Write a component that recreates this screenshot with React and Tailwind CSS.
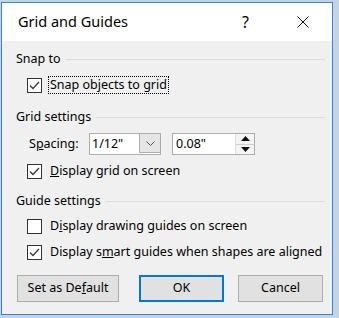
import React from 'react';

const font = { fontFamily: '"Noto Sans", "Open Sans", sans-serif' };

const Check = ({ checked }) => (
  <div className="w-[15px] h-[15px] border border-[#333333] bg-white flex items-center justify-center shrink-0">
    {checked && (
      <svg width="11" height="9" viewBox="0 0 11 9">
        <path d="M1 4.5 L4 7.5 L10 1" fill="none" stroke="#3a3a3a" strokeWidth="1.3" />
      </svg>
    )}
  </div>
);

const Section = ({ label, className }) => (
  <div className={`flex items-center h-[16px] pl-[14px] pr-[7px] ${className}`}>
    <span className="text-[12.5px] leading-[16px] text-black">{label}</span>
    <div className="flex-1 h-px bg-[#dcdcdc] ml-[5px]"></div>
  </div>
);

const CheckRow = ({ checked, children, className, focused }) => (
  <div className={`flex items-center h-[18px] pl-[25px] ${className}`}>
    <Check checked={checked} />
    <span
      className={`ml-[7px] text-[12.5px] leading-[16px] text-black px-[1px] ${
        focused ? 'outline outline-1 outline-dotted outline-black' : ''
      }`}
    >
      {children}
    </span>
  </div>
);

export default function App() {
  return (
    <div className="w-[339px] h-[318px] bg-[#c3d4e6] pl-[1px] pt-[2px]" style={font}>
      <div className="w-[332px] h-[313px] border border-[#3b82d0] bg-[#f0f0f0] flex flex-col">
        <div className="h-[38px] bg-white flex items-center pl-[16px] shrink-0">
          <span className="text-[14.5px] text-black flex-1">Grid and Guides</span>
          <span className="text-[16px] text-black mr-[48px]">?</span>
          <svg width="12" height="12" viewBox="0 0 12 12" className="mr-[23px]">
            <path d="M0.5 0.5 L11.5 11.5 M11.5 0.5 L0.5 11.5" stroke="#111" strokeWidth="1" />
          </svg>
        </div>

        <Section label="Snap to" className="mt-[10px]" />
        <CheckRow checked focused className="mt-[9px]">
          Snap objects to <span className="underline">g</span>rid
        </CheckRow>

        <Section label="Grid settings" className="mt-[15px]" />
        <div className="flex items-center h-[22px] mt-[8px] pl-[27px]">
          <span className="text-[12.5px] text-black w-[60px]">
            S<span className="underline">p</span>acing:
          </span>
          <div className="flex h-[22px] w-[72px] border border-[#adadad] bg-white">
            <span className="flex-1 text-[12.5px] leading-[20px] pl-[2px] text-black">1/12"</span>
            <div className="w-[22px] h-full border border-[#adadad] bg-[#e5e5e5] flex items-center justify-center -m-px">
              <svg width="9" height="5" viewBox="0 0 9 5">
                <path d="M0.5 0.5 L4.5 4.5 L8.5 0.5" fill="none" stroke="#555" strokeWidth="1" />
              </svg>
            </div>
          </div>
          <div className="flex h-[22px] w-[83px] ml-[11px] border border-[#adadad] bg-white">
            <span className="flex-1 text-[12.5px] leading-[20px] pl-[3px] text-black">0.08"</span>
            <div className="w-[19px] flex flex-col border-l border-[#dcdcdc]">
              <div className="flex-1 flex items-center justify-center bg-[#f4f4f4] border-b border-[#cfcfcf]">
                <svg width="9" height="5" viewBox="0 0 9 5">
                  <path d="M0 5 L4.5 0 L9 5 Z" fill="#111" />
                </svg>
              </div>
              <div className="flex-1 flex items-center justify-center bg-[#f4f4f4]">
                <svg width="9" height="5" viewBox="0 0 9 5">
                  <path d="M0 0 L4.5 5 L9 0 Z" fill="#111" />
                </svg>
              </div>
            </div>
          </div>
        </div>
        <CheckRow checked className="mt-[7px]">
          <span className="underline">D</span>isplay grid on screen
        </CheckRow>

        <Section label="Guide settings" className="mt-[13px]" />
        <CheckRow className="mt-[8px]">
          D<span className="underline">i</span>splay drawing guides on screen
        </CheckRow>
        <CheckRow checked className="mt-[8px]">
          Display s<span className="underline">m</span>art guides when shapes are aligned
        </CheckRow>

        <div className="flex mt-[14px] pl-[15px] h-[27px]">
          <button className="w-[102px] h-full bg-[#e1e1e1] border border-[#adadad] text-[12.5px] text-black">
            Set as De<span className="underline">f</span>ault
          </button>
          <button className="w-[85px] h-full ml-[20px] bg-[#e1e1e1] border-2 border-[#0078d7] text-[12.5px] text-black">
            OK
          </button>
          <button className="w-[85px] h-full ml-[14px] bg-[#e1e1e1] border border-[#adadad] text-[12.5px] text-black">
            Cancel
          </button>
        </div>
      </div>
    </div>
  );
}
